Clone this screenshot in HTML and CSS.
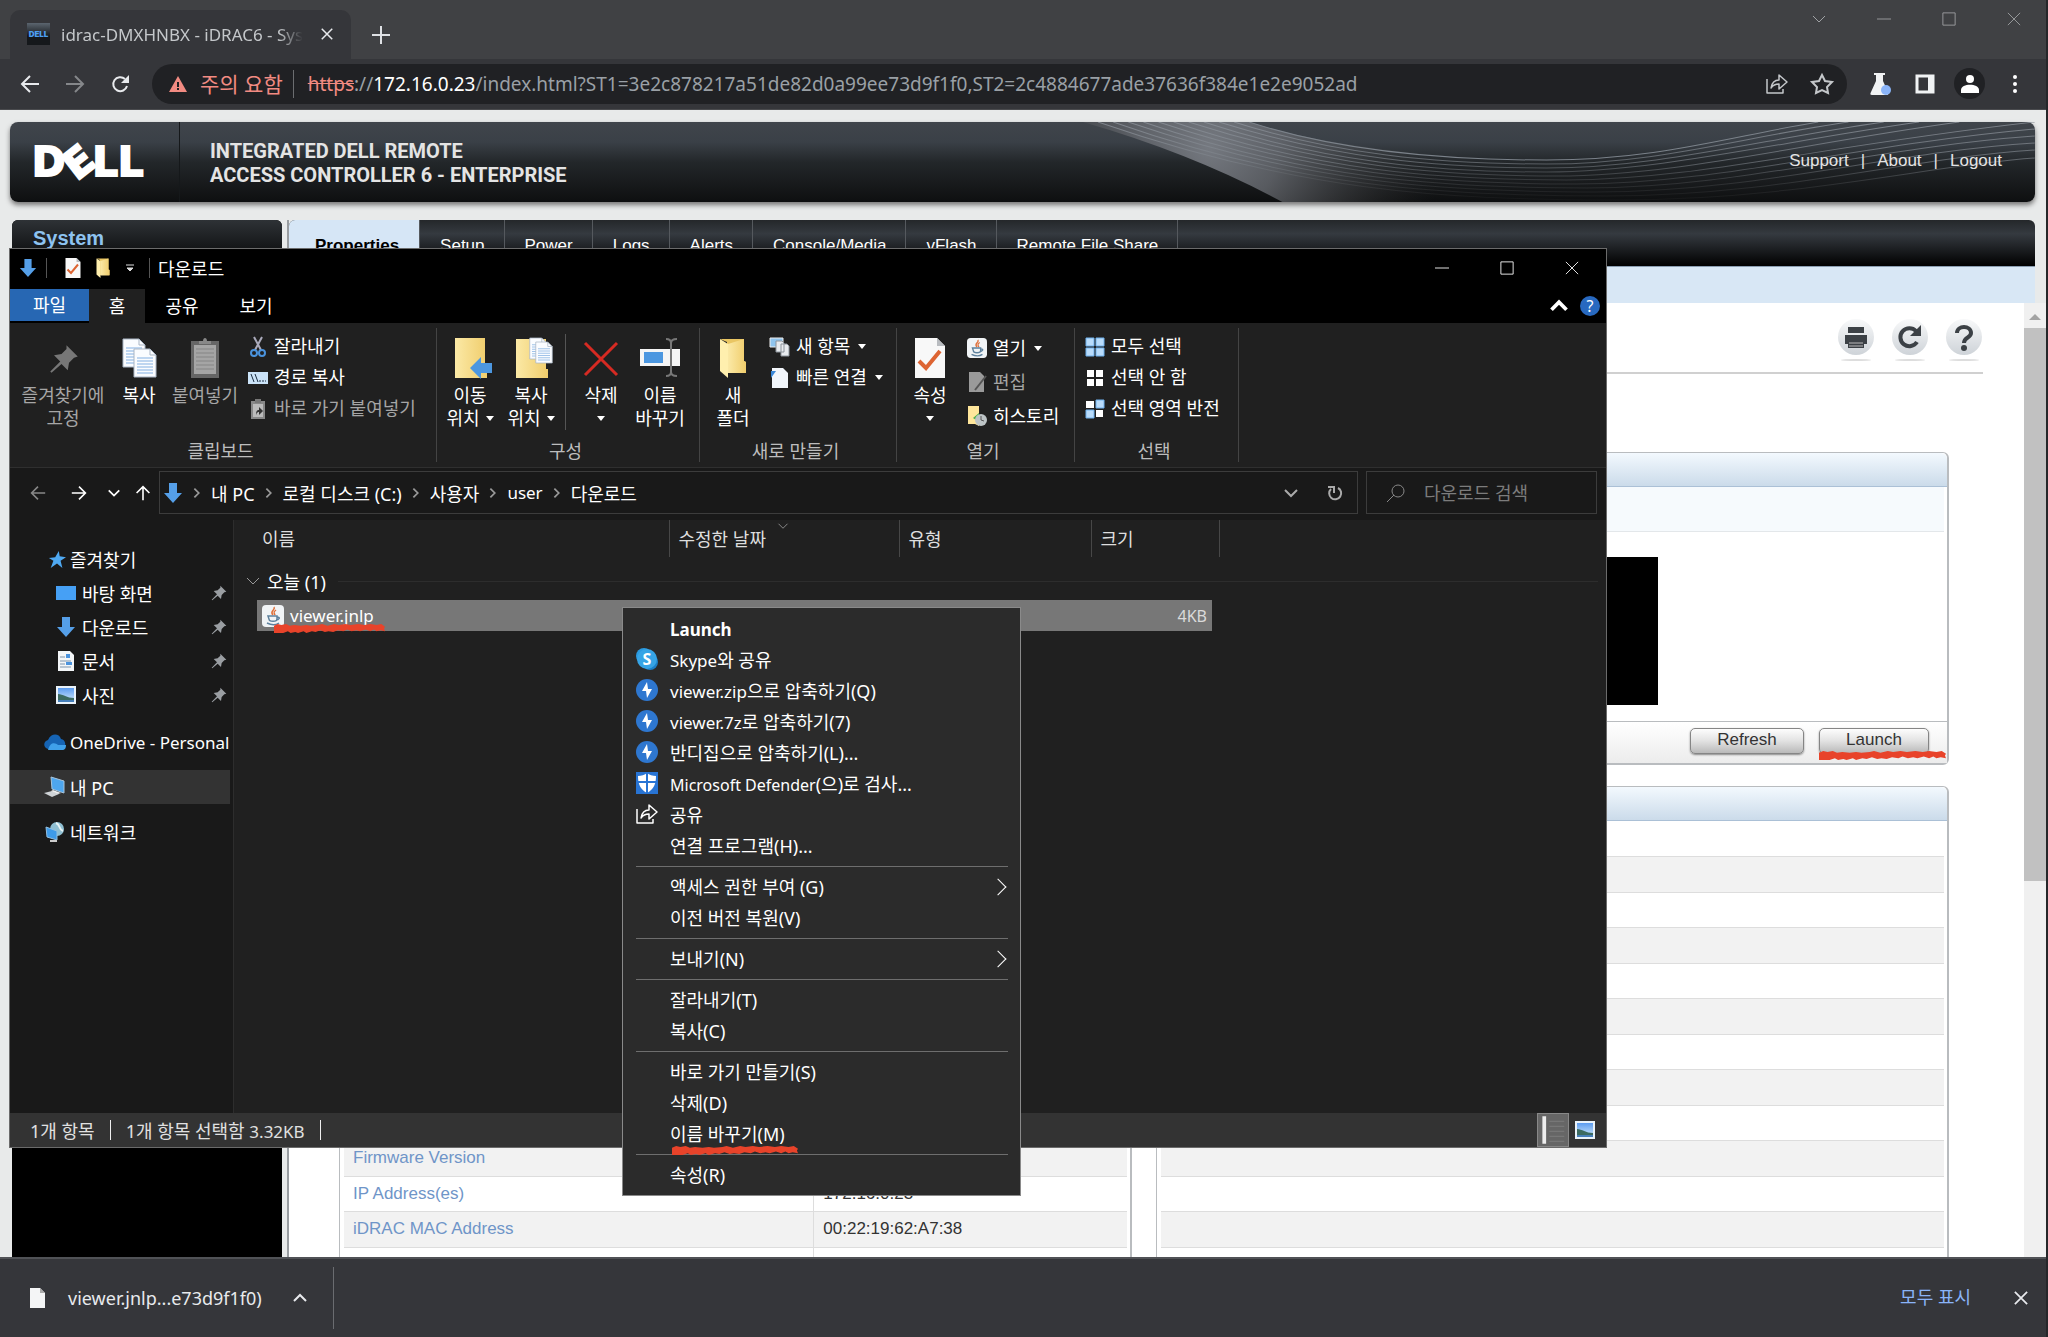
FILE: index.html
```html
<!DOCTYPE html>
<html lang="ko">
<head>
  <meta charset="UTF-8" />
  <meta name="viewport" content="width=device-width, initial-scale=1.0"/>
  <title>idrac-DMXHNBX - iDRAC6 - System</title>
  <link rel="stylesheet" href="styles.css">
</head>
<body>
  <svg class="sprite" aria-hidden="true">
    <defs>
      <linearGradient id="g-folder" x1="0" x2="1"><stop offset="0" stop-color="#fbe9a6"/><stop offset="1" stop-color="#f0cd6c"/></linearGradient>
      <linearGradient id="g-orb" x2="0" y2="1"><stop offset="0" stop-color="#f8f9fa"/><stop offset="1" stop-color="#ced3d8"/></linearGradient>
      <linearGradient id="g-sky" x2="0" y2="1"><stop offset="0" stop-color="#5c9cf0"/><stop offset="1" stop-color="#d5ecfb"/></linearGradient>
      <symbol id="down" viewBox="0 0 20 20"><path d="M6 0h8v10h5l-9 10L1 10h5z" fill="#559fe8"/></symbol>
      <symbol id="pin" viewBox="0 0 24 24"><path d="M14 1l9 9-3 1-4 4-1 6-5-5-8 7-1-1 8-8-5-5 6-1 4-4z" fill="currentColor"/></symbol>
      <symbol id="check-doc" viewBox="0 0 30 40"><path d="M0 0h22l8 8v32H0z" fill="#f8f8f8"/><path d="M22 0v8h8z" fill="#b9bcc0"/><path d="M4 23l7 7 14-17" fill="none" stroke="#dd6432" stroke-width="4"/></symbol>
      <symbol id="folder" viewBox="0 0 28 40"><path d="M1 1h24v22l2 1v10H8V4z" fill="#eac663"/><path d="M1 1l8 5v34l-8-7z" fill="#ffefae"/><path d="M9 6l16-5v22l2 1v11H9z" fill="url(#g-folder)"/></symbol>
      <symbol id="page" viewBox="0 0 24 30"><path d="M1 1h16l6 6v22H1z" fill="#fafcff" stroke="#a9b5c4"/><path d="M17 1v6h6" fill="none" stroke="#a9b5c4"/><path d="M4 10h16M4 13h16M4 16h16M4 19h16M4 22h16M4 25h16" stroke="#83b0e2"/></symbol>
      <symbol id="java" viewBox="0 0 22 22"><rect width="22" height="22" rx="4" fill="#f1f4f6"/><path d="M12 2c2 3-5 4-1 8M14 5c-3 2-2 3-1 5" fill="none" stroke="#e0703a" stroke-width="1.5"/><path d="M6 11h9v3c0 3-8 3-8 0zM15 12c4 0 2 3-1 3M5 18c4 2 9 2 12 0" fill="none" stroke="#5d819d" stroke-width="1.5"/></symbol>
      <symbol id="picture" viewBox="0 0 20 18"><path d="M0 0h20v18H0z" fill="#eaf3fa"/><path d="M2 2h16v14H2z" fill="url(#g-sky)"/><path d="M2 8c5 0 9 4 16 4v4H2z" fill="#3c6b61"/><path d="M2 14h16v2H2z" fill="#467fba"/></symbol>
      <symbol id="share" viewBox="0 0 22 22"><path d="M1 6v14h16v-4M5 15c1-6 4-8 8-8V2l8 7-8 7v-5c-3 0-6 1-8 4z" fill="none" stroke="currentColor" stroke-width="1.5" stroke-linejoin="round"/></symbol>
      <symbol id="zip" viewBox="0 0 22 22"><circle cx="11" cy="11" r="11" fill="#2e77d0"/><path d="M11 3l-5 9h4l1 7 5-9h-4z" fill="#fff"/></symbol>
      <symbol id="x" viewBox="0 0 16 16"><path d="M1 1l14 14M15 1L1 15" fill="none" stroke="currentColor"/></symbol>
      <symbol id="min" viewBox="0 0 16 16"><path d="M0 8h16" stroke="currentColor"/></symbol>
      <symbol id="max" viewBox="0 0 16 16"><path d="M1 1h14v14H1z" fill="none" stroke="currentColor"/></symbol>
      <symbol id="chev-d" viewBox="0 0 16 16"><path d="M2 5l6 6 6-6" fill="none" stroke="currentColor" stroke-width="var(--w,2)"/></symbol>
      <symbol id="chev-r" viewBox="0 0 16 16"><path d="M5 3l5 5-5 5" fill="none" stroke="currentColor" stroke-width="2"/></symbol>
      <symbol id="arrow" viewBox="0 0 20 20"><path d="M1 10h17M10 2l8 8-8 8" fill="none" stroke="currentColor" stroke-width="2"/></symbol>
      <symbol id="reload" viewBox="0 0 20 20"><path d="M17 12a7 7 0 1 1-2-7" fill="none" stroke="currentColor" stroke-width="2"/><path d="M19 1v8h-8z" fill="currentColor"/></symbol>
      <symbol id="scribble" viewBox="0 0 120 10" preserveAspectRatio="none"><path d="M0 2l4-2 4 1 5-1 4 2 5-1 7 1 6-1 5 1 8-1 4-1 6 2 7-2 5 1 7-1 6 1 8-1 7 1 6-1 7 1 5-1 4 3-1 2 1 3-5-1-4 1-3-2-4 2-5-2-6 2-4-1-5 1-5-2-4 2-6-1-5 2-5-1-4 1-5-2-5 2-4-1-6 2-3-2-6 2-3-1-5 1-3-2-5 2-3 1-4-1-3 1-2-3z" fill="#e8432a"/></symbol>
    </defs>
  </svg>

  <header class="chrome">
    <div class="tab-strip">
      <div class="browser-tab">
        <span class="favicon">DELL</span>
        <span class="tab-title">idrac-DMXHNBX - iDRAC6 - Sys</span>
        <button aria-label="탭 닫기"><svg class="i12 bold"><use href="#x"/></svg></button>
      </div>
      <button class="new-tab" aria-label="새 탭"><svg class="i18" viewBox="0 0 18 18"><path d="M9 0v18M0 9h18" stroke="#dfe1e5" stroke-width="2"/></svg></button>
      <div class="win-buttons">
        <button aria-label="탭 검색"><svg class="i16 thin"><use href="#chev-d"/></svg></button>
        <button aria-label="최소화"><svg class="i14"><use href="#min"/></svg></button>
        <button aria-label="최대화"><svg class="i14"><use href="#max"/></svg></button>
        <button aria-label="닫기"><svg class="i14"><use href="#x"/></svg></button>
      </div>
    </div>
    <div class="toolbar">
      <button aria-label="뒤로"><svg class="i20 flip"><use href="#arrow"/></svg></button>
      <button aria-label="앞으로" class="dim"><svg class="i20"><use href="#arrow"/></svg></button>
      <button aria-label="새로고침"><svg class="i20"><use href="#reload"/></svg></button>
      <div class="omnibox">
        <svg class="i18" viewBox="0 0 18 16"><path d="M9 0l9 16H0z" fill="#f28b82"/><path d="M9 6v5M9 12v2" stroke="#202124" stroke-width="2"/></svg>
        <span class="warn">주의 요함</span>
        <span class="url"><s>https</s>://<b>172.16.0.23</b>/index.html?ST1=3e2c878217a51de82d0a99ee73d9f1f0,ST2=2c4884677ade37636f384e1e2e9052ad</span>
        <button aria-label="공유"><svg class="i22"><use href="#share"/></svg></button>
        <button aria-label="북마크"><svg class="i22" viewBox="0 0 22 22"><path d="M11 2l3 6 7 1-5 5 1 6-6-3-6 3 1-6-5-5 7-1z" fill="none" stroke="currentColor" stroke-width="2"/></svg></button>
      </div>
      <button aria-label="실험실"><svg class="i22" viewBox="0 0 22 22"><path d="M5 0h11v2h-2v6l5 11c1 2 0 3-1 3H3c-2 0-2-1-1-3L7 8V2H5z" fill="#f1f3f4"/><circle cx="17" cy="17" r="5" fill="#8ab4f8"/></svg></button>
      <button aria-label="측면 패널"><svg class="i20" viewBox="0 0 20 20"><path d="M2 2h16v16H2z" fill="none" stroke="#f1f3f4" stroke-width="3"/><path d="M13 2h6v16h-6z" fill="#f1f3f4"/></svg></button>
      <button aria-label="프로필" class="avatar"><svg class="i18" viewBox="0 0 18 18"><circle cx="9" cy="4" r="4" fill="#fff"/><path d="M0 18v-3c0-7 18-7 18 0v3z" fill="#fff"/></svg></button>
      <button aria-label="메뉴"><svg class="i20" viewBox="0 0 20 20"><circle cx="10" cy="3" r="2" fill="#fff"/><circle cx="10" cy="10" r="2" fill="#fff"/><circle cx="10" cy="17" r="2" fill="#fff"/></svg></button>
    </div>
  </header>

  <main class="idrac">
    <div class="banner">
      <svg class="waves" viewBox="0 0 945 80" preserveAspectRatio="none">
        <defs>
          <radialGradient id="glow" cx="125" cy="25" r="230" gradientUnits="userSpaceOnUse"><stop offset="0" stop-color="#757980"/><stop offset="0.3" stop-color="#686b71" stop-opacity="0.8"/><stop offset="1" stop-color="#333" stop-opacity="0"/></radialGradient>
          <linearGradient id="fade" x2="0" y2="80" gradientUnits="userSpaceOnUse"><stop offset="0" stop-color="#8b9199"/><stop offset="0.5" stop-color="#7c8289" stop-opacity="0.8"/><stop offset="1" stop-color="#333" stop-opacity="0.2"/></linearGradient>
        </defs>
        <path d="M0 0Q110 32 198 80H400V36Q250 28 165 0z" fill="url(#glow)"/>
        <path d="M165 0C250 28 350 38 460 38S640 15 730 0" fill="none" stroke="#7b828a"/>
        <g fill="none" stroke="url(#fade)" stroke-opacity="0.8">
          <path d="M150 0C250 32 350 42 460 42S650 16 760 0"/>
          <path d="M135 0C250 36 350 46 460 46S670 18 795 0"/>
          <path d="M120 0C240 40 350 50 460 50S690 20 830 0"/>
          <path d="M105 0C240 44 350 54 470 54S710 22 870 0"/>
          <path d="M90 0C230 48 350 58 480 58S730 24 945 0"/>
          <path d="M75 0C230 52 350 62 490 62S760 24 945 7"/>
          <path d="M60 0C220 56 350 66 500 66S780 26 945 14"/>
          <path d="M45 0C220 60 350 70 510 70S800 30 945 21"/>
          <path d="M30 0C210 64 350 74 520 74S820 36 945 28"/>
          <path d="M15 0C210 68 350 78 530 78S840 43 945 36"/>
        </g>
      </svg>
      <div class="dell" aria-label="DELL"><span>D</span><span class="tilt">E</span><span>L</span><span>L</span></div>
      <h1>INTEGRATED DELL REMOTE<br>ACCESS CONTROLLER 6 - ENTERPRISE</h1>
      <nav><a href="#">Support</a>|<a href="#">About</a>|<a href="#">Logout</a></nav>
    </div>
    <div class="columns">
      <aside class="tree"><h2>System</h2></aside>
      <section class="main">
        <nav class="tabs">
          <a href="#" class="active">Properties</a><a href="#">Setup</a><a href="#">Power</a><a href="#">Logs</a><a href="#">Alerts</a><a href="#">Console/Media</a><a href="#">vFlash</a><a href="#">Remote File Share</a>
        </nav>
        <div class="subtabs"></div>
        <div class="scroller">
          <div class="content">
            <div class="page-tools">
              <button aria-label="Print"><svg viewBox="0 0 38 44"><circle cx="19" cy="19" r="18" fill="url(#g-orb)"/><ellipse cx="19" cy="42" rx="15" ry="1" fill="#ddd"/><path d="M11 9h16v6H11zM8 17h22v9H8zM11 23h16v7H11z" fill="#3c4146"/><path d="M12 25h14M12 28h14" stroke="#bbb"/></svg></button>
              <button aria-label="Refresh"><svg viewBox="0 0 38 44"><circle cx="19" cy="19" r="18" fill="url(#g-orb)"/><ellipse cx="19" cy="42" rx="15" ry="1" fill="#ddd"/><path d="M26 24a9 9 0 1 1-1-11" fill="none" stroke="#3c4146" stroke-width="4"/><path d="M30 7v11H19z" fill="#3c4146"/></svg></button>
              <button aria-label="Help"><svg viewBox="0 0 38 44"><circle cx="19" cy="19" r="18" fill="url(#g-orb)"/><ellipse cx="19" cy="42" rx="15" ry="1" fill="#ddd"/><path d="M12 15c0-8 14-8 14 0 0 5-7 4-7 10" fill="none" stroke="#3c4146" stroke-width="4"/><circle cx="19" cy="30" r="3" fill="#3c4146"/></svg></button>
            </div>
            <div class="panels">
              <div class="panel"></div>
              <div class="panel preview">
                <div class="panel-head"></div>
                <div class="options"></div>
                <div class="console"><div class="screen"></div></div>
                <div class="panel-foot">
                  <button>Refresh</button>
                  <button class="launch">Launch</button>
                  <svg class="scribble"><use href="#scribble"/></svg>
                </div>
              </div>
              <div class="panel">
                <div class="panel-head"></div>
                <table>
                  <tr><td></td><td></td></tr><tr><td></td><td></td></tr><tr><td></td><td></td></tr>
                  <tr><td></td><td></td></tr><tr><td></td><td></td></tr><tr><td></td><td></td></tr>
                  <tr><td></td><td></td></tr><tr><td></td><td></td></tr><tr><td></td><td></td></tr>
                  <tr><td><a href="#">Firmware Version</a></td><td></td></tr>
                  <tr><td><a href="#">IP Address(es)</a></td><td>172.16.0.23</td></tr>
                  <tr><td><a href="#">iDRAC MAC Address</a></td><td>00:22:19:62:A7:38</td></tr>
                  <tr><td></td><td></td></tr>
                </table>
              </div>
              <div class="panel">
                <div class="panel-head"></div>
                <table>
                  <tr><td></td></tr><tr><td></td></tr><tr><td></td></tr><tr><td></td></tr><tr><td></td></tr>
                  <tr><td></td></tr><tr><td></td></tr><tr><td></td></tr><tr><td></td></tr><tr><td></td></tr>
                  <tr><td></td></tr><tr><td></td></tr><tr><td></td></tr>
                </table>
              </div>
            </div>
          </div>
          <div class="scrollbar"><span class="step"></span><span class="thumb"></span></div>
        </div>
      </section>
    </div>
  </main>

  <footer class="downloads">
    <svg class="file" viewBox="0 0 15 20"><path d="M0 0h10l5 5v15H0z" fill="#f4f5f6"/><path d="M10 0v5h5z" fill="#aaa"/></svg>
    <span class="file-name">viewer.jnlp...e73d9f1f0)</span>
    <button aria-label="옵션"><svg class="i16 up"><use href="#chev-d"/></svg></button>
    <span class="rule"></span>
    <a href="#">모두 표시</a>
    <button aria-label="닫기"><svg class="i14 bold"><use href="#x"/></svg></button>
  </footer>

  <!-- 파일 탐색기 -->
  <div class="explorer">
    <div class="title-bar">
      <svg class="i18"><use href="#down"/></svg><span class="bar"></span>
      <svg class="qdoc"><use href="#check-doc"/></svg>
      <svg class="qfolder"><use href="#folder"/></svg>
      <svg class="qmore" viewBox="0 0 8 8"><path d="M0 1h8M1 4h6L4 7z" fill="#ddd" stroke="#ddd"/></svg>
      <span class="bar"></span><span>다운로드</span>
      <div class="win-buttons">
        <button aria-label="최소화"><svg class="i14"><use href="#min"/></svg></button>
        <button aria-label="최대화"><svg class="i14"><use href="#max"/></svg></button>
        <button aria-label="닫기"><svg class="i14"><use href="#x"/></svg></button>
      </div>
    </div>
    <div class="ribbon-tabs">
      <button class="file-tab">파일</button><button class="on">홈</button><button>공유</button><button>보기</button>
      <svg class="i20 up fold"><use href="#chev-d"/></svg><span class="help">?</span>
    </div>
    <div class="ribbon">
      <div class="group g1">
        <div class="tools">
          <button class="big dim"><svg viewBox="0 0 40 40"><use href="#pin" x="6" y="6" width="30" height="30"/></svg>즐겨찾기에<br>고정</button>
          <button class="big"><svg viewBox="0 0 40 40"><use href="#page" x="3" y="0" width="24" height="30"/><use href="#page" x="14" y="10" width="24" height="30"/></svg>복사</button>
          <button class="big dim"><svg viewBox="0 0 40 40"><path d="M6 3h28v37H6z" fill="#666"/><path d="M9 7h22v29H9z" fill="#a5a5a5"/><path d="M14 6V3h4c0-4 4-4 4 0h4v3z" fill="#888"/><path d="M11 11h18M11 15h18M11 19h18M11 23h18M11 27h18M11 31h18" stroke="#858585"/></svg>붙여넣기</button>
          <div class="list">
            <button><svg viewBox="0 0 20 20"><path d="M6 0l7 13M14 0L7 13" stroke="#aab" stroke-width="2"/><circle cx="6" cy="16" r="3" fill="none" stroke="#4a93dd" stroke-width="2"/><circle cx="14" cy="16" r="3" fill="none" stroke="#4a93dd" stroke-width="2"/></svg>잘라내기</button>
            <button><svg viewBox="0 0 20 20"><path d="M0 4h20v12H0z" fill="#cbe3f8"/><path d="M3 6l3 8M7 6l3 8M11 13h2M14 13h2M17 13h1" stroke="#1a2c40"/></svg>경로 복사</button>
            <button class="dim"><svg viewBox="0 0 20 20"><path d="M3 2h14v18H3z" fill="#888"/><path d="M5 5h10v13H5z" fill="#bbb"/><path d="M7 0h6v4H7z" fill="#777"/><path d="M8 16c0-4 1-5 3-5V8l4 4-4 4v-3c-1 0-2 0-3 3z" fill="#333"/></svg>바로 가기 붙여넣기</button>
          </div>
        </div>
        <div class="caption">클립보드</div>
      </div>
      <div class="group g2">
        <div class="tools">
          <button class="big"><svg viewBox="0 0 40 40"><path d="M5 0h30v30h2v10H5z" fill="url(#g-folder)"/><path d="M20 30l11-11v6h11v10H31v6z" fill="#4c97e0"/></svg>이동<br>위치<i class="caret"></i></button>
          <button class="big"><svg viewBox="0 0 40 40"><path d="M5 1h30v30h2v9H5z" fill="url(#g-folder)"/><use href="#page" x="18" y="-1" width="18" height="23"/><use href="#page" x="24" y="3" width="18" height="23"/></svg>복사<br>위치<i class="caret"></i></button>
          <span class="split"></span>
          <button class="big"><svg viewBox="0 0 40 40"><path d="M4 5l32 32M36 5L4 37" stroke="#d62a22" stroke-width="3"/></svg>삭제<br><i class="caret alone"></i></button>
          <button class="big"><svg viewBox="0 0 40 40"><path d="M0 11h40v17H0z" fill="#f5f5f5"/><path d="M4 14h19v11H4z" fill="#4c97e0"/><path d="M26 1q5 0 5 4v29q0 4-5 4M37 1q-6 0-6 4M37 38q-6 0-6-4" fill="none" stroke="#777" stroke-width="2"/></svg>이름<br>바꾸기</button>
        </div>
        <div class="caption">구성</div>
      </div>
      <div class="group g3">
        <div class="tools">
          <button class="big"><svg><use href="#folder"/></svg>새<br>폴더</button>
          <div class="list">
            <button><svg viewBox="0 0 20 20"><path d="M0 1h13v9H0z" fill="#8fc4ee" stroke="#eee"/><path d="M6 4h6l2 2v9H6zM11 7h6l2 2v10h-8z" fill="#e8ebef" stroke="#8d949c"/></svg>새 항목<i class="caret"></i></button>
            <button><svg viewBox="0 0 20 20"><path d="M2 0h11l5 5v15H2z" fill="#f2f6fb"/><path d="M1 3h5l-5 7z" fill="#3b88d8"/></svg>빠른 연결<i class="caret"></i></button>
          </div>
        </div>
        <div class="caption">새로 만들기</div>
      </div>
      <div class="group g4">
        <div class="tools">
          <button class="big"><svg><use href="#check-doc"/></svg>속성<br><i class="caret alone"></i></button>
          <div class="list loose">
            <button><svg><use href="#java"/></svg>열기<i class="caret"></i></button>
            <button class="dim"><svg viewBox="0 0 20 20"><path d="M2 0h11l4 4v16H2z" fill="#9a9a9a"/><path d="M19 4L8 18" stroke="#555" stroke-width="2"/></svg>편집</button>
            <button><svg viewBox="0 0 20 20"><path d="M1 0h11v20l-4-2H1z" fill="#ffe69b"/><path d="M6 12l6-5v9z" fill="#4eaf4e"/><circle cx="14" cy="14" r="6" fill="#bdc4c6"/><path d="M14 10v4l3 1" stroke="#555" fill="none"/></svg>히스토리</button>
          </div>
        </div>
        <div class="caption">열기</div>
      </div>
      <div class="group g5">
        <div class="tools">
          <div class="list">
            <button><svg viewBox="0 0 20 20"><path d="M1 1h8v8H1zM11 1h8v8h-8zM1 11h8v8H1zM11 11h8v8h-8z" fill="#b9dcfb" stroke="#6fb1ee"/></svg>모두 선택</button>
            <button><svg viewBox="0 0 20 20"><path d="M2 2h7v7H2zM11 2h7v7h-7zM2 11h7v7H2zM11 11h7v7h-7z" fill="#fff"/></svg>선택 안 함</button>
            <button><svg viewBox="0 0 20 20"><path d="M1 2h8v7H1zM11 11h7v7h-7z" fill="#fff"/><path d="M11 1h8v8h-8zM1 11h8v8H1z" fill="#b9dcfb" stroke="#6fb1ee"/></svg>선택 영역 반전</button>
          </div>
        </div>
        <div class="caption">선택</div>
      </div>
    </div>
    <div class="address-row">
      <button class="dim" aria-label="뒤로"><svg class="i16 flip"><use href="#arrow"/></svg></button>
      <button aria-label="앞으로"><svg class="i16"><use href="#arrow"/></svg></button>
      <button class="narrow" aria-label="최근"><svg class="i14"><use href="#chev-d"/></svg></button>
      <button class="narrow" aria-label="위로"><svg class="i16 turn"><use href="#arrow"/></svg></button>
      <div class="address">
        <svg class="i20"><use href="#down"/></svg>
        <svg class="sep"><use href="#chev-r"/></svg><span>내 PC</span>
        <svg class="sep"><use href="#chev-r"/></svg><span>로컬 디스크 (C:)</span>
        <svg class="sep"><use href="#chev-r"/></svg><span>사용자</span>
        <svg class="sep"><use href="#chev-r"/></svg><span class="en">user</span>
        <svg class="sep"><use href="#chev-r"/></svg><span>다운로드</span>
        <svg class="i16 drop"><use href="#chev-d"/></svg>
        <svg class="i16 again" viewBox="0 0 16 16"><path d="M11 3a6 6 0 1 1-7 1M1 2h6v6" fill="none" stroke="currentColor" stroke-width="2"/></svg>
      </div>
      <label class="search">
        <svg class="i18" viewBox="0 0 18 18"><circle cx="11" cy="7" r="6" fill="none" stroke="#888"/><path d="M7 11l-7 7" stroke="#888"/></svg>
        <input type="text" placeholder="다운로드 검색" aria-label="다운로드 검색">
      </label>
    </div>
    <div class="body">
      <nav class="side">
        <a href="#"><svg viewBox="0 0 20 20"><path d="M12 1l1 6 7 1-6 4 2 8-6-5-7 5 3-8-5-3 7-1z" fill="#4fa9f2"/></svg>즐겨찾기</a>
        <a href="#" class="sub"><svg viewBox="0 0 20 20"><path d="M0 3h20v14H0z" fill="#46a0f5"/></svg>바탕 화면<svg class="pin"><use href="#pin"/></svg></a>
        <a href="#" class="sub"><svg><use href="#down"/></svg>다운로드<svg class="pin"><use href="#pin"/></svg></a>
        <a href="#" class="sub"><svg viewBox="0 0 20 20"><path d="M2 0h12l4 4v16H2z" fill="#f3f6f8"/><path d="M4 6h5M4 10h11M4 13h5M4 16h11" stroke="#7c94ab"/><path d="M10 3h4v4h-4zM10 11h6v3h-6z" fill="#4a93dd"/></svg>문서<svg class="pin"><use href="#pin"/></svg></a>
        <a href="#" class="sub"><svg><use href="#picture"/></svg>사진<svg class="pin"><use href="#pin"/></svg></a>
        <a href="#" class="gap"><svg class="wide" viewBox="0 0 22 16"><path d="M4 15C-1 14-1 7 4 6 7-1 15-1 17 5c5 0 6 9 1 10z" fill="#1664b4"/><path d="M4 16c2-8 7-8 10-5l8 0c0 3-1 5-4 5z" fill="#3fa0ea"/></svg><span class="en">OneDrive - Personal</span></a>
        <a href="#" class="gap on"><svg class="wide" viewBox="0 0 22 22"><path d="M7 1l13 4v12L8 13z" fill="#4ea6ee" stroke="#a8c4da"/><path d="M0 17l8-2 7 3-7 3z" fill="#cfd3d6"/><path d="M9 14l8 3-3 1-7-3z" fill="#eee"/></svg>내 PC</a>
        <a href="#" class="gap"><svg class="wide" viewBox="0 0 22 22"><circle cx="13" cy="8" r="7" fill="#8fbfd2"/><path d="M12 2c5 2 2 6 7 8" stroke="#e7f3f4" stroke-width="2" fill="none"/><path d="M2 6l11 4v9L3 16z" fill="#3d9bea" stroke="#92bfe0"/><path d="M6 19h7v2H6z" fill="#ccc"/></svg>네트워크</a>
      </nav>
      <div class="files">
        <table>
          <thead><tr><th class="c-name">이름</th><th class="c-date">수정한 날짜<svg class="sort"><use href="#chev-d"/></svg></th><th class="c-type">유형</th><th class="c-size">크기</th><th class="c-end"></th><th class="c-rest"></th></tr></thead>
          <tbody>
            <tr><td colspan="6"><div class="day"><svg class="i16"><use href="#chev-d"/></svg>오늘 (1)<span></span></div></td></tr>
            <tr class="selected"><td class="c-name"><div class="name"><svg class="i22"><use href="#java"/></svg><span class="en">viewer.jnlp</span><svg class="scribble"><use href="#scribble"/></svg></div></td><td></td><td></td><td class="size">4KB</td></tr>
          </tbody>
        </table>
      </div>
    </div>
    <div class="status">
      <span>1개 항목</span><span class="bar"></span><span>1개 항목 선택함 <span class="en">3.32KB</span></span><span class="bar"></span>
      <button class="view on" aria-label="자세히"><svg viewBox="0 0 24 24"><path d="M5 1v22" stroke="#eee" stroke-width="3"/><path d="M9 5h12M9 9h12M9 13h12M9 17h12M9 21h12" stroke="#777"/></svg></button>
      <button class="view" aria-label="큰 아이콘"><svg class="i20"><use href="#picture"/></svg></button>
    </div>

    <ul class="menu">
      <li><b class="en">Launch</b></li>
      <li><svg class="icon" viewBox="0 0 22 22"><circle cx="8" cy="8" r="8" fill="#2a9ae0"/><circle cx="14" cy="14" r="8" fill="#1c7fc8"/><circle cx="11" cy="11" r="10" fill="#36a4e6"/><text x="11" y="17" text-anchor="middle">S</text></svg><span class="en">Skype</span>와 공유</li>
      <li><svg class="icon"><use href="#zip"/></svg><span class="en">viewer.zip</span>으로 압축하기(Q)</li>
      <li><svg class="icon"><use href="#zip"/></svg><span class="en">viewer.7z</span>로 압축하기(7)</li>
      <li><svg class="icon"><use href="#zip"/></svg>반디집으로 압축하기(L)...</li>
      <li><svg class="icon" viewBox="0 0 22 22"><path d="M0 0h22v22H0z" fill="#2874d4"/><path d="M11 1c2 2 6 3 9 3 0 8-2 13-9 17C4 17 2 12 2 4c3 0 7-1 9-3z" fill="#fff"/><path d="M11 0v22M1 10h20" stroke="#2874d4" stroke-width="2"/></svg><span class="en small">Microsoft Defender</span>(으)로 검사...</li>
      <li><svg class="icon"><use href="#share"/></svg>공유</li>
      <li>연결 프로그램(H)...</li>
      <li class="line"></li>
      <li>액세스 권한 부여 (G)<i class="more"></i></li>
      <li>이전 버전 복원(V)</li>
      <li class="line"></li>
      <li>보내기(N)<i class="more"></i></li>
      <li class="line"></li>
      <li>잘라내기(T)</li>
      <li>복사(C)</li>
      <li class="line"></li>
      <li>바로 가기 만들기(S)</li>
      <li>삭제(D)</li>
      <li>이름 바꾸기(M)<svg class="scribble"><use href="#scribble"/></svg></li>
      <li class="line"></li>
      <li>속성(R)</li>
    </ul>
  </div>
</body>
</html>
```
FILE: styles.css
```css
* {
  box-sizing: border-box;
}

body {
  margin: 0;
  height: 100vh;
  display: flex;
  flex-direction: column;
  position: relative;
  overflow: hidden;
  background: #e8eaea;
  border-right: 2px solid #26272a;
  font-family: "Noto Sans", "Noto Sans CJK KR", sans-serif;
  font-size: 18px;
}

button {
  margin: 0;
  padding: 0;
  border: 0;
  background: none;
  color: inherit;
  font: inherit;
}

a {
  color: inherit;
  text-decoration: none;
}

svg {
  display: block;
  flex: none;
  overflow: visible;
}

.sprite {
  position: absolute;
  width: 0;
  height: 0;
}

.i12 { width: 12px; height: 12px; }
.i14 { width: 14px; height: 14px; }
.i16 { width: 16px; height: 16px; }
.i18 { width: 18px; height: 18px; }
.i20 { width: 20px; height: 20px; }
.i22 { width: 22px; height: 22px; }
.bold { stroke-width: 2; }
.thin { --w: 1; }
.flip { transform: scaleX(-1); }
.up { transform: rotate(180deg); }
.turn { transform: rotate(-90deg); }
.en { font-size: 17px; }
.small { font-size: 16px; }

/* browser */
.chrome {
  flex: none;
  color: #e8eaed;
}

.tab-strip {
  height: 59px;
  display: flex;
  padding-left: 10px;
  background: #404144;
}

.browser-tab {
  width: 341px;
  margin-top: 10px;
  padding: 0 18px 1px 17px;
  display: flex;
  align-items: center;
  border-radius: 10px 10px 0 0;
  background: #35363a;
}

.favicon {
  width: 23px;
  height: 22px;
  margin-right: 11px;
  background: linear-gradient(#5b656f, #15181b 60%);
  color: #4d9ff0;
  font: 900 8px/22px Inter, sans-serif;
  text-align: center;
}

.tab-title {
  white-space: nowrap;
  font-size: 17px;
  color: #c4c7ca;
  -webkit-mask-image: linear-gradient(90deg, #000 90%, transparent);
  mask-image: linear-gradient(90deg, #000 90%, transparent);
}

.browser-tab button {
  margin-left: auto;
}

.new-tab {
  margin: 10px 0 0 21px;
}

.win-buttons {
  display: flex;
  margin-left: auto;
}

.win-buttons button {
  width: 65px;
  display: flex;
  justify-content: center;
}

.tab-strip .win-buttons {
  height: 38px;
  color: #a0a2a5;
}

.tab-strip .win-buttons button {
  align-items: center;
}

.toolbar {
  height: 51px;
  display: flex;
  align-items: center;
  padding: 0 9px 1px 7px;
  background: #35363a;
  border-bottom: 1px solid #4a4b4e;
}

.toolbar > button {
  width: 45px;
  display: flex;
  justify-content: center;
}

.toolbar .dim {
  color: #85878a;
}

.omnibox {
  flex: 1;
  height: 40px;
  margin: 0 10px;
  padding: 0 14px 0 17px;
  display: flex;
  align-items: center;
  border-radius: 20px;
  background: #202124;
}

.warn {
  margin: 0 14px 0 13px;
  padding-right: 10px;
  border-right: 1px solid #6b6d70;
  line-height: 28px;
  color: #f28b82;
  font-size: 21px;
}

.url {
  flex: 1;
  white-space: nowrap;
  color: #9aa0a6;
  font-size: 19px;
}

.url s {
  color: #f28b82;
}

.url b {
  font-weight: 400;
  color: #fff;
}

.omnibox button {
  margin-left: 23px;
  color: #c4c7ca;
}

.toolbar .avatar {
  width: 31px;
  height: 31px;
  margin: 0 7px;
  align-items: center;
  border-radius: 50%;
  background: #202124;
}

/* iDRAC page */
.idrac {
  flex: 1;
  min-height: 0;
  display: flex;
  flex-direction: column;
  font-family: "Liberation Sans", Arial, sans-serif;
  font-size: 17px;
}

.banner {
  position: relative;
  flex: none;
  height: 80px;
  margin: 12px 11px 0 10px;
  padding: 0 33px 0 22px;
  display: flex;
  align-items: center;
  border-radius: 8px;
  background: linear-gradient(#40454b, #3a4047 25%, #23272a 50%, #0e0f10);
  box-shadow: 0 3px 5px #777;
  color: #e4e4e4;
}

.waves {
  position: absolute;
  left: 53%;
  width: 47%;
  height: 80px;
  overflow: hidden;
}

.dell {
  width: 148px;
  display: flex;
  font: 700 40px/80px "DejaVu Sans", sans-serif;
  color: #fff;
  border-right: 1px solid #15181a;
  -webkit-text-stroke: 2px #fff;
}

.dell .tilt {
  transform: rotate(-38deg);
}

.banner h1 {
  margin: 0 0 0 30px;
  padding-top: 2px;
  font: 700 20px/24px Roboto, sans-serif;
}

.banner nav {
  position: relative;
  margin: -2px 0 0 auto;
}

.banner nav a {
  margin: 0 12px;
}

.banner nav a:last-child {
  margin-right: 0;
}

.columns {
  flex: 1;
  min-height: 0;
  margin: 18px 0 0 12px;
  display: flex;
  gap: 5px;
}

.tree {
  width: 270px;
  background: #000;
  border-radius: 6px 6px 0 0;
}

.tree h2 {
  margin: 0;
  padding-left: 21px;
  border-radius: 6px 6px 0 0;
  background: linear-gradient(#2e3236, #0c0d0e);
  font-size: 20px;
  line-height: 37px;
  color: #8ec3f0;
}

.main {
  flex: 1;
  min-width: 0;
  display: flex;
  flex-direction: column;
  border-left: 2px solid #999da1;
}

.tabs {
  flex: none;
  height: 47px;
  margin-right: 11px;
  display: flex;
  border-radius: 6px 6px 0 0;
  background: linear-gradient(#24272a, #353a40 30%, #000);
  border-bottom: 1px solid #8a9db0;
  color: #fff;
  line-height: 52px;
}

.tabs a {
  padding: 0 19px 0 20px;
  border-right: 1px solid #55595e;
}

.tabs .active {
  padding: 0 20px 0 26px;
  border-radius: 6px 0 0 0;
  background: #d6e6f6;
  color: #000;
  font-weight: 700;
}

.subtabs {
  flex: none;
  height: 36px;
  margin-right: 11px;
  background: #d8e7f5;
}

.scroller {
  flex: 1;
  min-height: 0;
  display: flex;
  background: #fff;
}

.content {
  flex: 1;
  overflow: hidden;
  padding: 15px 75px 0 50px;
}

.page-tools {
  height: 56px;
  margin-right: -34px;
  display: flex;
  justify-content: flex-end;
  align-items: flex-start;
  gap: 16px;
  border-bottom: 2px solid #d0d0d0;
}

.page-tools svg {
  width: 38px;
  height: 44px;
}

.panels {
  margin-top: 78px;
  display: grid;
  grid-template-columns: 1fr 1fr;
  gap: 21px 24px;
}

.panel {
  border: 1px solid #b9bcbf;
  border-right-width: 2px;
  border-radius: 6px 6px 0 0;
}

.preview {
  border-bottom-width: 2px;
  border-radius: 6px;
}

.panel-head {
  height: 34px;
  border-bottom: 1px solid #abc0d6;
  background: linear-gradient(#f3f9fe, #cbdbea);
  border-radius: 6px 6px 0 0;
}

.options {
  height: 45px;
  margin-right: 3px;
  border-bottom: 1px solid #e3e7ea;
  background: #f6fafd;
}

.console {
  padding: 25px 289px 16px 120px;
}

.screen {
  height: 148px;
  background: #000;
}

.panel-foot {
  position: relative;
  height: 42px;
  padding: 6px 18px 0 0;
  display: flex;
  justify-content: flex-end;
  gap: 15px;
  border-top: 1px solid #b9bcbf;
  background: linear-gradient(#fff, #ececec);
}

.panel-foot button {
  width: 114px;
  height: 26px;
  border: 1px solid #858585;
  border-radius: 5px;
  background: linear-gradient(#fdfdfd, #e2e2e2 50%, #b9b9b9);
  box-shadow: 0 1px 2px #888;
  line-height: 20px;
  padding-bottom: 3px;
  color: #333;
}

.panel-foot .launch {
  width: 110px;
}

.scribble {
  position: absolute;
  height: 9px;
}

.panel-foot .scribble {
  right: 1px;
  top: 29px;
  width: 127px;
}

.panel table {
  width: calc(100% - 7px);
  margin-left: 4px;
  border-collapse: collapse;
  table-layout: fixed;
}

.panel td {
  height: 35px;
  padding: 0 9px;
  border-bottom: 1px solid #ddd;
  color: #333;
}

.panel tr:nth-child(even) td {
  height: 36px;
  background: #f2f2f2;
}

.panel td + td {
  width: 40%;
  border-left: 1px solid #ddd;
}

.panel td a {
  color: #6f95c8;
}

.scrollbar {
  width: 22px;
  background: #f0f0f0;
}

.scrollbar .step {
  display: block;
  width: 12px;
  height: 6px;
  margin: 11px 5px 8px;
  background: #a3a3a3;
  clip-path: polygon(50% 0, 100% 100%, 0 100%);
}

.scrollbar .thumb {
  display: block;
  height: 58%;
  background: #c1c1c1;
}

/* download shelf */
.downloads {
  flex: none;
  height: 80px;
  padding: 0 18px 0 30px;
  display: flex;
  align-items: center;
  background: #35363a;
  border-top: 2px solid #505256;
  color: #e8eaed;
}

.downloads .file {
  width: 15px;
  height: 20px;
}

.file-name {
  width: 200px;
  margin: 0 24px 0 23px;
  white-space: nowrap;
}

.downloads .rule {
  width: 1px;
  height: 62px;
  margin: 0 auto 0 25px;
  background: #6a6c70;
}

.downloads a {
  margin: 0 43px 4px 0;
  color: #8ab4f8;
}

/* file explorer */
.explorer {
  position: absolute;
  left: 9px;
  top: 248px;
  bottom: 189px;
  width: calc(100% - 448px);
  display: flex;
  flex-direction: column;
  border: 1px solid #6b6b6b;
  background: #202020;
  color: #fff;
}

.title-bar {
  flex: none;
  height: 40px;
  padding: 0 2px 3px 9px;
  display: flex;
  align-items: center;
  background: #000;
}

.bar {
  width: 1px;
  height: 20px;
  background: #555;
}

.title-bar .bar {
  margin: 0 8px 0 9px;
}

.qdoc {
  width: 16px;
  height: 20px;
  margin: 0 15px 0 10px;
}

.qfolder {
  width: 14px;
  height: 20px;
}

.qmore {
  width: 8px;
  height: 8px;
  margin: 0 6px 0 16px;
}

.ribbon-tabs {
  flex: none;
  height: 34px;
  padding-right: 6px;
  display: flex;
  align-items: center;
  background: #000;
}

.ribbon-tabs button {
  height: 34px;
  width: 74px;
  padding-bottom: 2px;
}

.ribbon-tabs .file-tab {
  width: 79px;
  height: 32px;
  align-self: flex-start;
  background: #2767b3;
}

.ribbon-tabs .on {
  width: 56px;
  background: #202020;
}

.fold {
  margin-left: auto;
  --w: 3;
}

.help {
  width: 20px;
  height: 20px;
  margin-left: 11px;
  border-radius: 50%;
  background: #2869c0;
  font-size: 16px;
  line-height: 20px;
  text-align: center;
}

.ribbon {
  flex: none;
  height: 144px;
  padding: 5px 0;
  display: flex;
  line-height: 23px;
}

.group {
  display: flex;
  flex-direction: column;
  border-right: 1px solid #444;
}

.g1 { width: 427px; }
.g2 { width: 263px; }
.g3 { width: 197px; }
.g4 { width: 178px; }
.g5 { width: 164px; }

.tools {
  flex: 1;
  display: flex;
  align-items: flex-start;
}

.big {
  width: 64px;
  padding-top: 10px;
  white-space: nowrap;
}

.big svg {
  width: 40px;
  height: 40px;
  margin: 0 auto 6px;
}

.g1 .big:first-child { width: 106px; }
.g1 .big:nth-child(2) { width: 46px; }
.g1 .big:nth-child(3) { width: 86px; }
.g2 .big + .big { width: 56px; }
.g2 .split + .big { width: 56px; }
.g2 .big:last-child { width: 62px; }
.g2 .big:first-child,
.g3 .big,
.g4 .big { width: 66px; }

.split {
  width: 1px;
  height: 96px;
  margin: 6px 7px 0 6px;
  background: #555;
}

.list {
  padding-top: 3px;
}

.list button {
  display: flex;
  align-items: center;
  gap: 6px;
  height: 31px;
  white-space: nowrap;
}

.list.loose button {
  height: 34px;
}

.list svg {
  width: 20px;
  height: 20px;
}

.g3 .list,
.g4 .list {
  padding-left: 4px;
}

.g5 .list {
  padding-left: 10px;
}

.ribbon .dim {
  color: #a6a6a6;
}

.g1 .dim svg {
  color: #777;
}

.caret {
  display: inline-block;
  margin-left: 6px;
  border: 4px solid transparent;
  border-top: 5px solid #fff;
  border-bottom: 0;
  vertical-align: 4px;
}

.caret.alone {
  margin-left: 0;
}

.list .caret {
  margin-left: 2px;
}

.caption {
  padding-right: 5px;
  margin-bottom: -1px;
  text-align: center;
  color: #bdbdbd;
}

.address-row {
  flex: none;
  height: 53px;
  padding: 3px 9px 6px 7px;
  display: flex;
  align-items: center;
  background: #191919;
  border-top: 1px solid #2f2f2f;
}

.address-row > button {
  width: 41px;
  display: flex;
  justify-content: center;
}

.address-row > .narrow {
  width: 29px;
}

.address-row > .narrow + .narrow {
  margin-right: 2px;
}

.address-row .dim {
  color: #888;
}

.address {
  flex: 1;
  height: 43px;
  padding: 0 14px 0 3px;
  display: flex;
  align-items: center;
  border: 1px solid #3c3c3c;
}

.sep {
  width: 14px;
  height: 14px;
  margin: 0 7px;
  color: #999;
}

.drop {
  margin-left: auto;
  color: #aaa;
}

.again {
  margin-left: 28px;
  color: #aaa;
}

.search {
  width: 231px;
  height: 43px;
  margin-left: 8px;
  padding: 0 10px 0 20px;
  display: flex;
  align-items: center;
  gap: 19px;
  border: 1px solid #3c3c3c;
}

.search input {
  width: 100%;
  min-width: 0;
  padding: 0;
  border: 0;
  outline: 0;
  background: none;
  color: #fff;
  font: inherit;
}

.search input::placeholder {
  color: #7c7c7c;
}

.body {
  flex: 1;
  min-height: 0;
  display: flex;
}

.side {
  width: 224px;
  padding-top: 22px;
  background: #191919;
  border-right: 1px solid #2d2d2d;
}

.side a {
  height: 34px;
  margin-right: 3px;
  padding-left: 38px;
  display: flex;
  align-items: center;
  gap: 4px;
  white-space: nowrap;
}

.side svg {
  width: 18px;
  height: 18px;
}

.side .sub {
  padding-left: 46px;
  gap: 6px;
}

.side .sub svg:first-child {
  width: 20px;
  height: 20px;
}

.side .sub .pin {
  width: 16px;
  height: 16px;
  margin-left: auto;
  margin-right: 3px;
  color: #9a9ea2;
}

.side .gap {
  margin-top: 11px;
  padding-left: 34px;
}

.side .sub + .gap {
  margin-top: 13px;
}

.side .wide {
  width: 22px;
  height: 22px;
}

.side .on {
  background: #333;
}

.files {
  flex: 1;
  padding: 0 8px 0 23px;
}

.files table {
  width: 100%;
  border-collapse: collapse;
  table-layout: fixed;
}

.files th {
  position: relative;
  height: 37px;
  padding: 0 0 2px 9px;
  border-right: 1px solid #474747;
  text-align: left;
  font-weight: 400;
  color: #dedede;
}

.files .c-name {
  width: 412px;
  padding-left: 5px;
}

.files .c-date { width: 230px; }
.files .c-type { width: 192px; }
.files .c-size { width: 121px; border-right: 0; }
.files .c-end { width: 7px; padding: 0; }
.files .c-rest { border-right: 0; }

.sort {
  position: absolute;
  left: 47%;
  top: 0;
  width: 12px;
  height: 12px;
  --w: 1;
  color: #aaa;
}

.files td {
  padding: 0;
}

.day {
  height: 43px;
  margin-left: -12px;
  padding-top: 5px;
  display: flex;
  align-items: center;
  gap: 6px;
  --w: 1;
}

.day svg {
  color: #999;
}

.day span {
  flex: 1;
  height: 1px;
  margin-left: 6px;
  background: #2d2d2d;
}

.selected td {
  height: 31px;
  background: #777;
}

.name {
  position: relative;
  display: flex;
  align-items: center;
  gap: 6px;
}

.name .scribble {
  left: 12px;
  top: 20px;
  width: 111px;
}

.files .size {
  padding-right: 5px;
  text-align: right;
  color: #dadada;
  font-size: 16px;
}

.status {
  flex: none;
  height: 34px;
  padding-left: 20px;
  display: flex;
  align-items: center;
  background: #333;
  color: #e0e0e0;
}

.status .bar {
  margin: 0 15px;
  background: #eee;
}

.view {
  width: 32px;
  height: 34px;
  display: flex;
  align-items: center;
  justify-content: center;
}

.view:last-child {
  margin-right: 5px;
}

.view.on {
  margin-left: auto;
  background: #666;
  border: 1px solid #888;
}

/* right click menu */
.menu {
  position: absolute;
  left: 612px;
  top: 358px;
  width: 399px;
  margin: 0;
  padding: 6px 0 4px;
  list-style: none;
  background: #2b2b2b;
  border: 1px solid #8a8a8a;
}

.menu li {
  position: relative;
  height: 31px;
  padding-left: 47px;
  line-height: 31px;
  white-space: nowrap;
}

.menu .icon {
  position: absolute;
  left: 13px;
  top: 3px;
  width: 22px;
  height: 22px;
}

.menu text {
  fill: #fff;
  font: 700 16px "Open Sans", sans-serif;
}

.menu .line {
  height: 1px;
  margin: 4px 12px 5px 13px;
  background: #6e6e6e;
}

.more {
  position: absolute;
  right: 16px;
  top: 9px;
  width: 12px;
  height: 12px;
  border: solid #fff;
  border-width: 1px 1px 0 0;
  transform: rotate(45deg);
}

.menu .scribble {
  left: 49px;
  top: 27px;
  width: 126px;
  z-index: 1;
}
```
